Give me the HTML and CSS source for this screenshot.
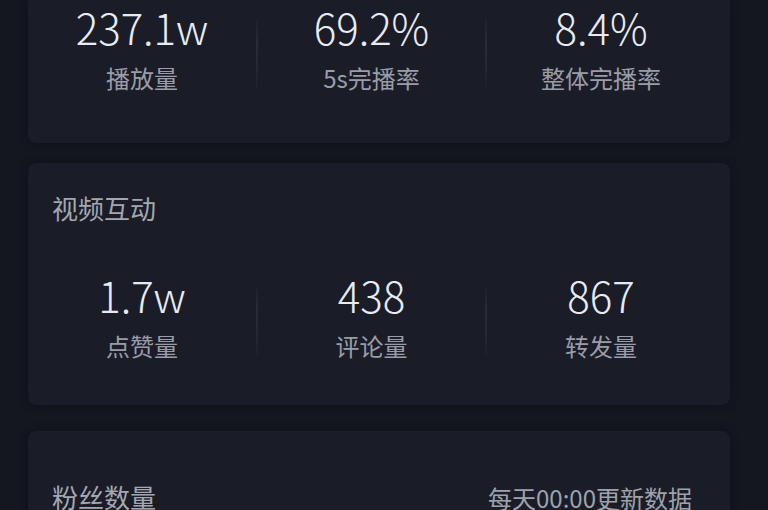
FILE: index.html
```html
<!DOCTYPE html>
<html lang="zh-CN">
<head>
<meta charset="utf-8">
<title>数据概览</title>
<link rel="stylesheet" href="styles.css">
</head>
<body>
<div class="page">
  <section class="card card-play">
    <div class="stats">
      <div class="stat">
        <div class="value">237.1w</div>
        <div class="label">播放量</div>
      </div>
      <div class="divider"></div>
      <div class="stat">
        <div class="value">69.2%</div>
        <div class="label">5s完播率</div>
      </div>
      <div class="divider"></div>
      <div class="stat">
        <div class="value">8.4%</div>
        <div class="label">整体完播率</div>
      </div>
    </div>
  </section>

  <section class="card card-interact">
    <div class="card-title">视频互动</div>
    <div class="stats">
      <div class="stat">
        <div class="value">1.7w</div>
        <div class="label">点赞量</div>
      </div>
      <div class="divider"></div>
      <div class="stat">
        <div class="value">438</div>
        <div class="label">评论量</div>
      </div>
      <div class="divider"></div>
      <div class="stat">
        <div class="value">867</div>
        <div class="label">转发量</div>
      </div>
    </div>
  </section>

  <section class="card card-fans">
    <div class="card-head">
      <div class="card-title">粉丝数量</div>
      <div class="card-note">每天00:00更新数据</div>
    </div>
  </section>
</div>
</body>
</html>
```

FILE: styles.css
```css
* {
  box-sizing: border-box;
}

html, body {
  margin: 0;
  padding: 0;
}

body {
  width: 768px;
  height: 510px;
  overflow: hidden;
  background: #141620;
  font-family: "Noto Sans CJK SC", "Noto Sans", sans-serif;
  color: #eceef3;
}

.page {
  display: flex;
  flex-direction: column;
  padding: 0 38px 0 28px;
}

.card {
  background: #1a1c28;
  border-radius: 8px;
  box-shadow: 0 0 10px rgba(8, 9, 14, 0.35);
}

.card-play {
  border-top-left-radius: 0;
  border-top-right-radius: 0;
  padding: 2px 0 49px 0;
}

.card-interact {
  margin-top: 20px;
  padding: 27px 0 43px 0;
}

.card-fans {
  margin-top: 26px;
  padding: 48px 38px 40px 24px;
}

.card-title {
  font-size: 26px;
  line-height: 36px;
  color: #a4a7b0;
}

.card-interact .card-title {
  padding-left: 24px;
  margin-bottom: 44px;
}

.card-head {
  display: flex;
  justify-content: space-between;
  align-items: baseline;
}

.card-note {
  font-size: 24px;
  line-height: 32px;
  color: #9fa2ac;
}

.stats {
  display: grid;
  grid-template-columns: 228px 2px 227px 2px 228px;
}

.stat {
  display: flex;
  flex-direction: column;
  align-items: center;
}

.value {
  font-size: 42px;
  line-height: 50px;
  font-weight: 300;
  color: #e9ebf0;
}

.label {
  margin-top: 10px;
  font-size: 24px;
  line-height: 32px;
  color: #9a9da7;
}

.divider {
  margin: 17px 0 6px 0;
  background: linear-gradient(to bottom,
    rgba(255, 255, 255, 0.015),
    rgba(255, 255, 255, 0.07) 35%,
    rgba(255, 255, 255, 0.05) 70%,
    rgba(255, 255, 255, 0.01));
}
```
